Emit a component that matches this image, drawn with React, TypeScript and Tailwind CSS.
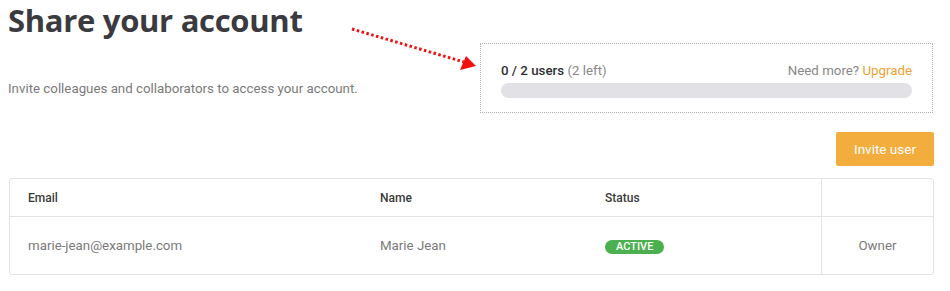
import React from "react";

export default function App() {
  return (
    <div className="w-[950px] h-[291px] bg-white relative overflow-hidden" style={{ fontFamily: "Roboto, 'Liberation Sans', sans-serif" }}>
      <svg className="absolute left-[350px] top-[26px]" width="130" height="46" viewBox="0 0 130 46">
        <line x1="2" y1="3" x2="114" y2="36" stroke="#f01010" strokeWidth="3" strokeDasharray="2.5 2.5" />
        <polygon points="126,40 110,44 116,30" fill="#f01010" />
      </svg>
      <div className="flex px-[8px] pt-0">
        <div className="flex-1">
          <h1 className="text-[31px] leading-[40px] font-bold text-[#3a3a3f] tracking-[-0.3px]" style={{ fontFamily: "'Open Sans', sans-serif" }}>Share your account</h1>
          <p className="mt-[39px] text-[13.3px] text-[#7a7a7a]">Invite colleagues and collaborators to access your account.</p>
        </div>
        <div className="mt-[43px] w-[453px] h-[70px] border border-dotted border-[#b0b0b0] px-[20px] pt-[19px] mr-[9px]">
          <div className="flex justify-between text-[13.3px] leading-[16px]">
            <span className="text-[#2f2f33] font-medium">0 / 2 users <span className="text-[#888] font-normal">(2 left)</span></span>
            <span className="text-[#888]">Need more? <span className="text-[#f0a030]">Upgrade</span></span>
          </div>
          <div className="mt-[4px] h-[15px] rounded-full bg-[#e1e1e6]" />
        </div>
      </div>
      <div className="flex justify-end pr-[16px] mt-[19px]">
        <button className="w-[98px] h-[34px] bg-[#f3ad3d] text-white text-[13.5px] rounded-[2px]">Invite user</button>
      </div>
      <div className="mx-[9px] mr-[16px] mt-[12px] border border-[#e3e3e3] rounded-[3px]">
        <div className="flex h-[38px] items-center border-b border-[#e3e3e3] text-[12px] font-medium text-[#3a3a3a]">
          <div className="w-[351px] pl-[18px]">Email</div>
          <div className="w-[244px] pl-[19px]">Name</div>
          <div className="w-[216px]">Status</div>
          <div className="flex-1 self-stretch border-l border-[#e3e3e3]" />
        </div>
        <div className="flex h-[57px] items-center text-[13.3px] text-[#7a7a7a]">
          <div className="w-[351px] pl-[18px]">marie-jean@example.com</div>
          <div className="w-[244px] pl-[19px]">Marie Jean</div>
          <div className="w-[216px]">
            <span className="inline-flex items-center h-[14px] px-[11px] rounded-full bg-[#4caf50] text-white text-[11px] font-medium">ACTIVE</span>
          </div>
          <div className="flex-1 self-stretch border-l border-[#e3e3e3] flex items-center justify-center">Owner</div>
        </div>
      </div>
    </div>
  );
}
